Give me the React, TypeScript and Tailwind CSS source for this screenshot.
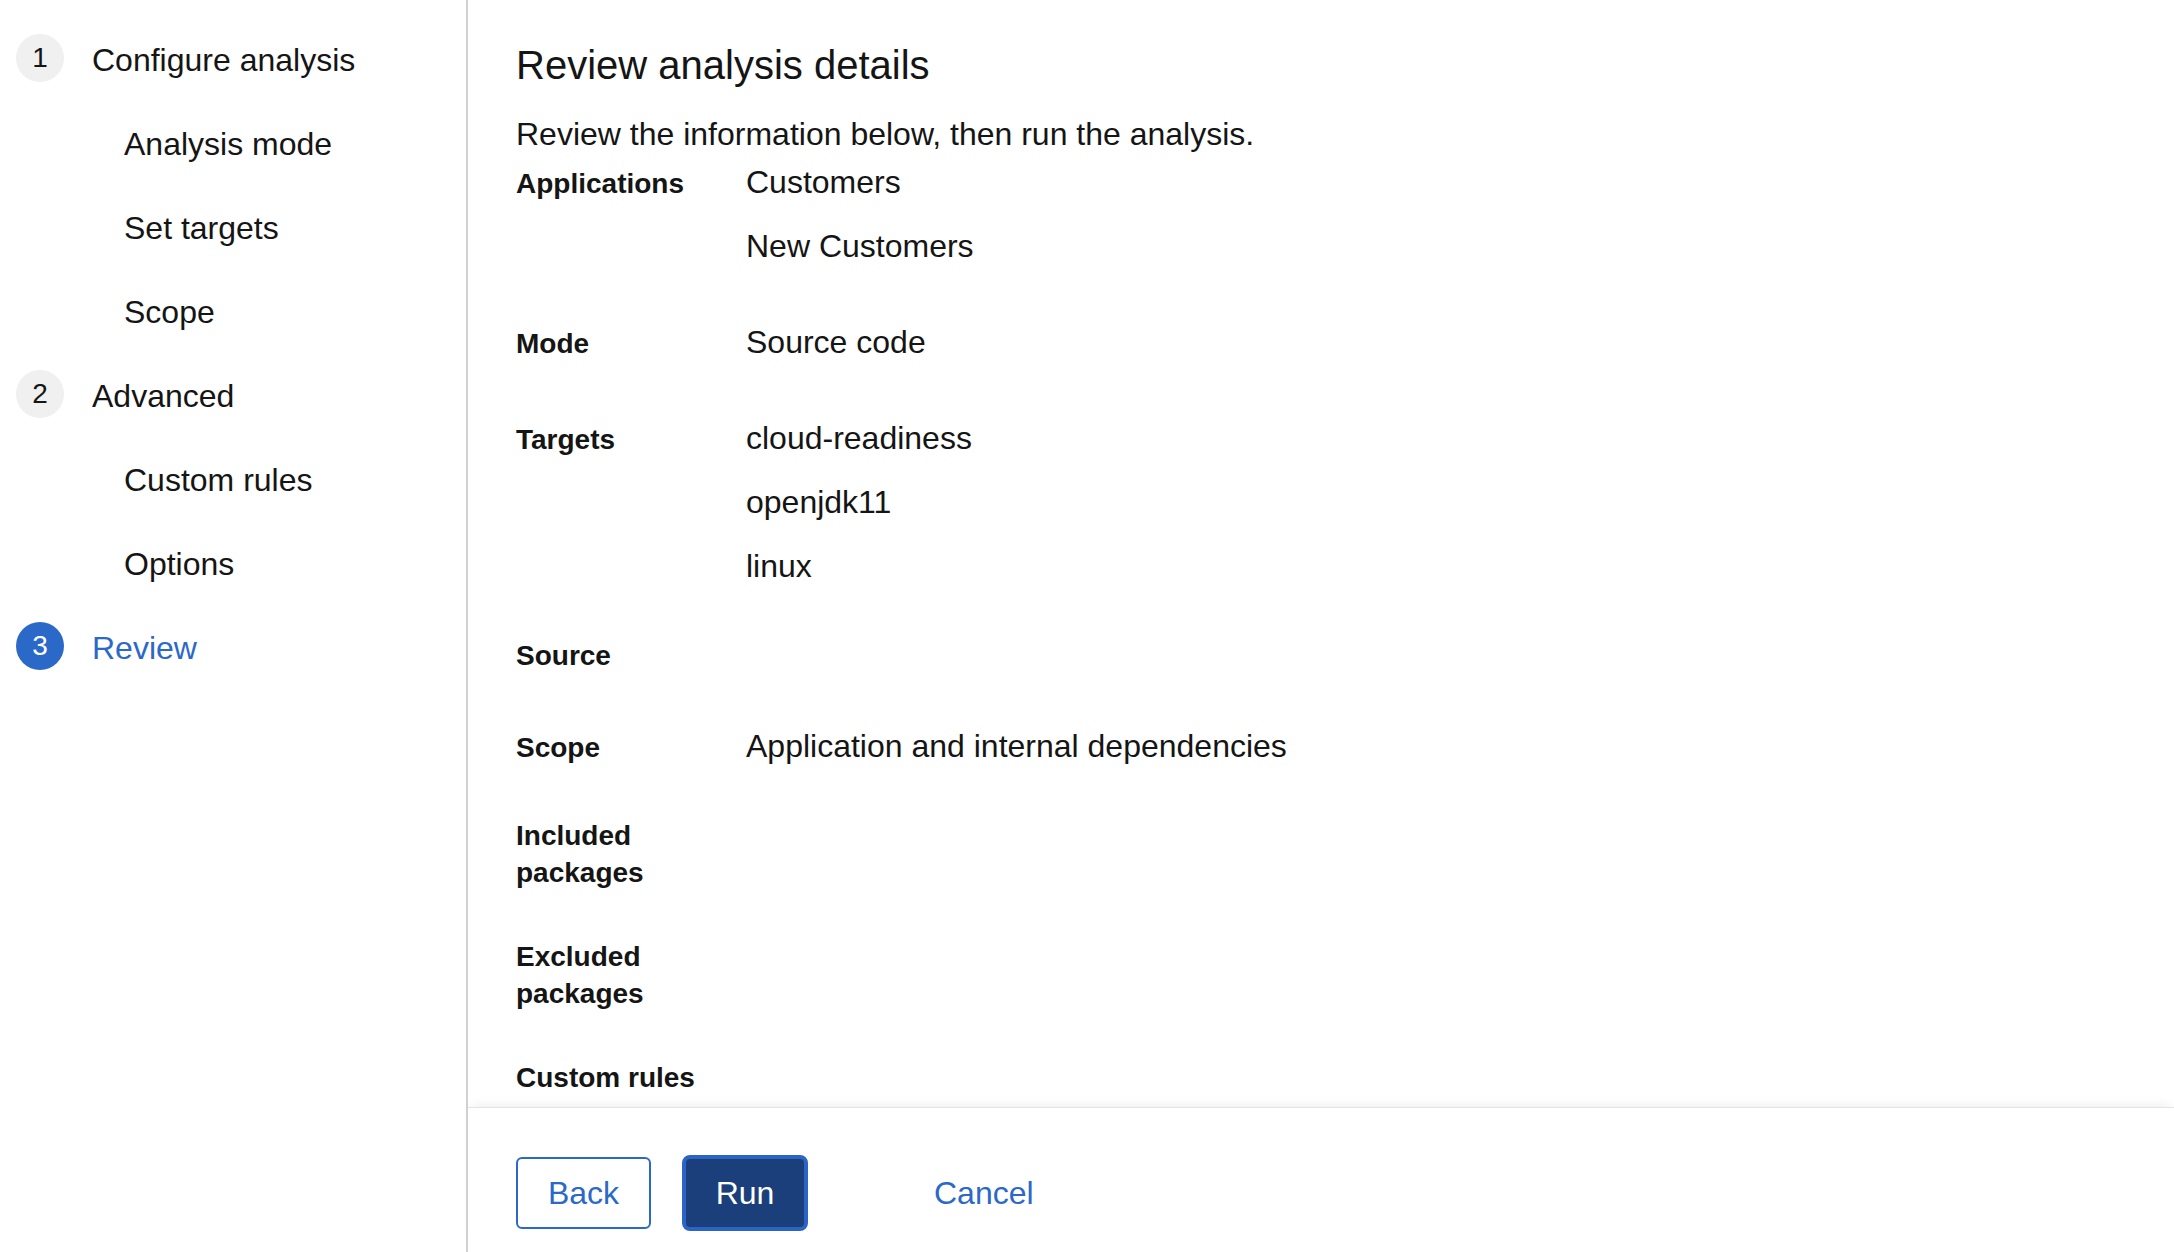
import React from "react";

const navSteps = [
  { num: 1, label: "Configure analysis", children: ["Analysis mode", "Set targets", "Scope"] },
  { num: 2, label: "Advanced", children: ["Custom rules", "Options"] },
  { num: 3, label: "Review", children: [], current: true },
];

const details: { term: string; values: string[] }[] = [
  { term: "Applications", values: ["Customers", "New Customers"] },
  { term: "Mode", values: ["Source code"] },
  { term: "Targets", values: ["cloud-readiness", "openjdk11", "linux"] },
  { term: "Source", values: [] },
  { term: "Scope", values: ["Application and internal dependencies"] },
  { term: "Included packages", values: [] },
  { term: "Excluded packages", values: [] },
  { term: "Custom rules", values: [] },
];

function WizardNav() {
  return (
    <nav className="w-[468px] shrink-0 border-r-2 border-[#d2d2d2] pt-[36px]">
      <ol className="flex flex-col gap-[36px]">
        {navSteps.map((step) => (
          <React.Fragment key={step.num}>
            <li className="flex h-[48px] items-center pl-4">
              <span
                className={
                  step.current
                    ? "mb-1 flex h-12 w-12 shrink-0 items-center justify-center rounded-full bg-[#2b69c8] text-[28px] text-white"
                    : "mb-1 flex h-12 w-12 shrink-0 items-center justify-center rounded-full bg-[#f0f0f0] text-[28px] text-[#151515]"
                }
              >
                {step.num}
              </span>
              <span
                className={
                  step.current
                    ? "ml-[28px] text-[32px] leading-[48px] text-[#2b69c8]"
                    : "ml-[28px] text-[32px] leading-[48px] text-[#151515]"
                }
              >
                {step.label}
              </span>
            </li>
            {step.children.map((child) => (
              <li key={child} className="flex h-[48px] items-center pl-[124px] text-[32px] leading-[48px] text-[#151515]">
                {child}
              </li>
            ))}
          </React.Fragment>
        ))}
      </ol>
    </nav>
  );
}

export default function App() {
  return (
    <div className="flex h-[1252px] w-full overflow-hidden bg-white font-['Liberation_Sans',Arial,sans-serif] text-[#151515]">
      <WizardNav />

      <div className="flex min-w-0 flex-1 flex-col">
        {/* Review body */}
        <main className="min-h-0 flex-1 overflow-hidden pl-[48px] pt-[39px]">
          <h2 className="mb-[19px] text-[40px] font-normal leading-[52px]">Review analysis details</h2>
          <p className="text-[32px] leading-[48px]">Review the information below, then run the analysis.</p>

          <dl className="flex flex-col gap-[48px]">
            {details.map((row) => (
              <div key={row.term} className="flex items-baseline">
                <dt className="w-[230px] shrink-0 pr-4 text-[28px] font-bold leading-[1.3]">{row.term}</dt>
                {row.values.length > 0 && (
                  <dd className="flex flex-col gap-4 text-[32px] leading-[48px]">
                    {row.values.map((v) => (
                      <span key={v}>{v}</span>
                    ))}
                  </dd>
                )}
              </div>
            ))}
          </dl>
        </main>

        {/* Footer */}
        <footer className="relative h-[145px] shrink-0 border-t border-[#e4e4e4] pl-[48px] pt-[47px] shadow-[0_-6px_10px_-4px_rgba(0,0,0,0.07)]">
          <div className="flex items-center">
            <button className="flex h-[72px] w-[135px] items-center justify-center rounded-[6px] border-2 border-[#2b69c8] bg-white text-[32px] text-[#2b69c8]">
              Back
            </button>
            <button className="ml-[31px] flex h-[76px] w-[126px] items-center justify-center rounded-[8px] border-4 border-[#2b63c6] bg-[#1b3f7b] text-[32px] text-white">
              Run
            </button>
            <button className="ml-[126px] text-[32px] text-[#2b69c8]">Cancel</button>
          </div>
        </footer>
      </div>
    </div>
  );
}
